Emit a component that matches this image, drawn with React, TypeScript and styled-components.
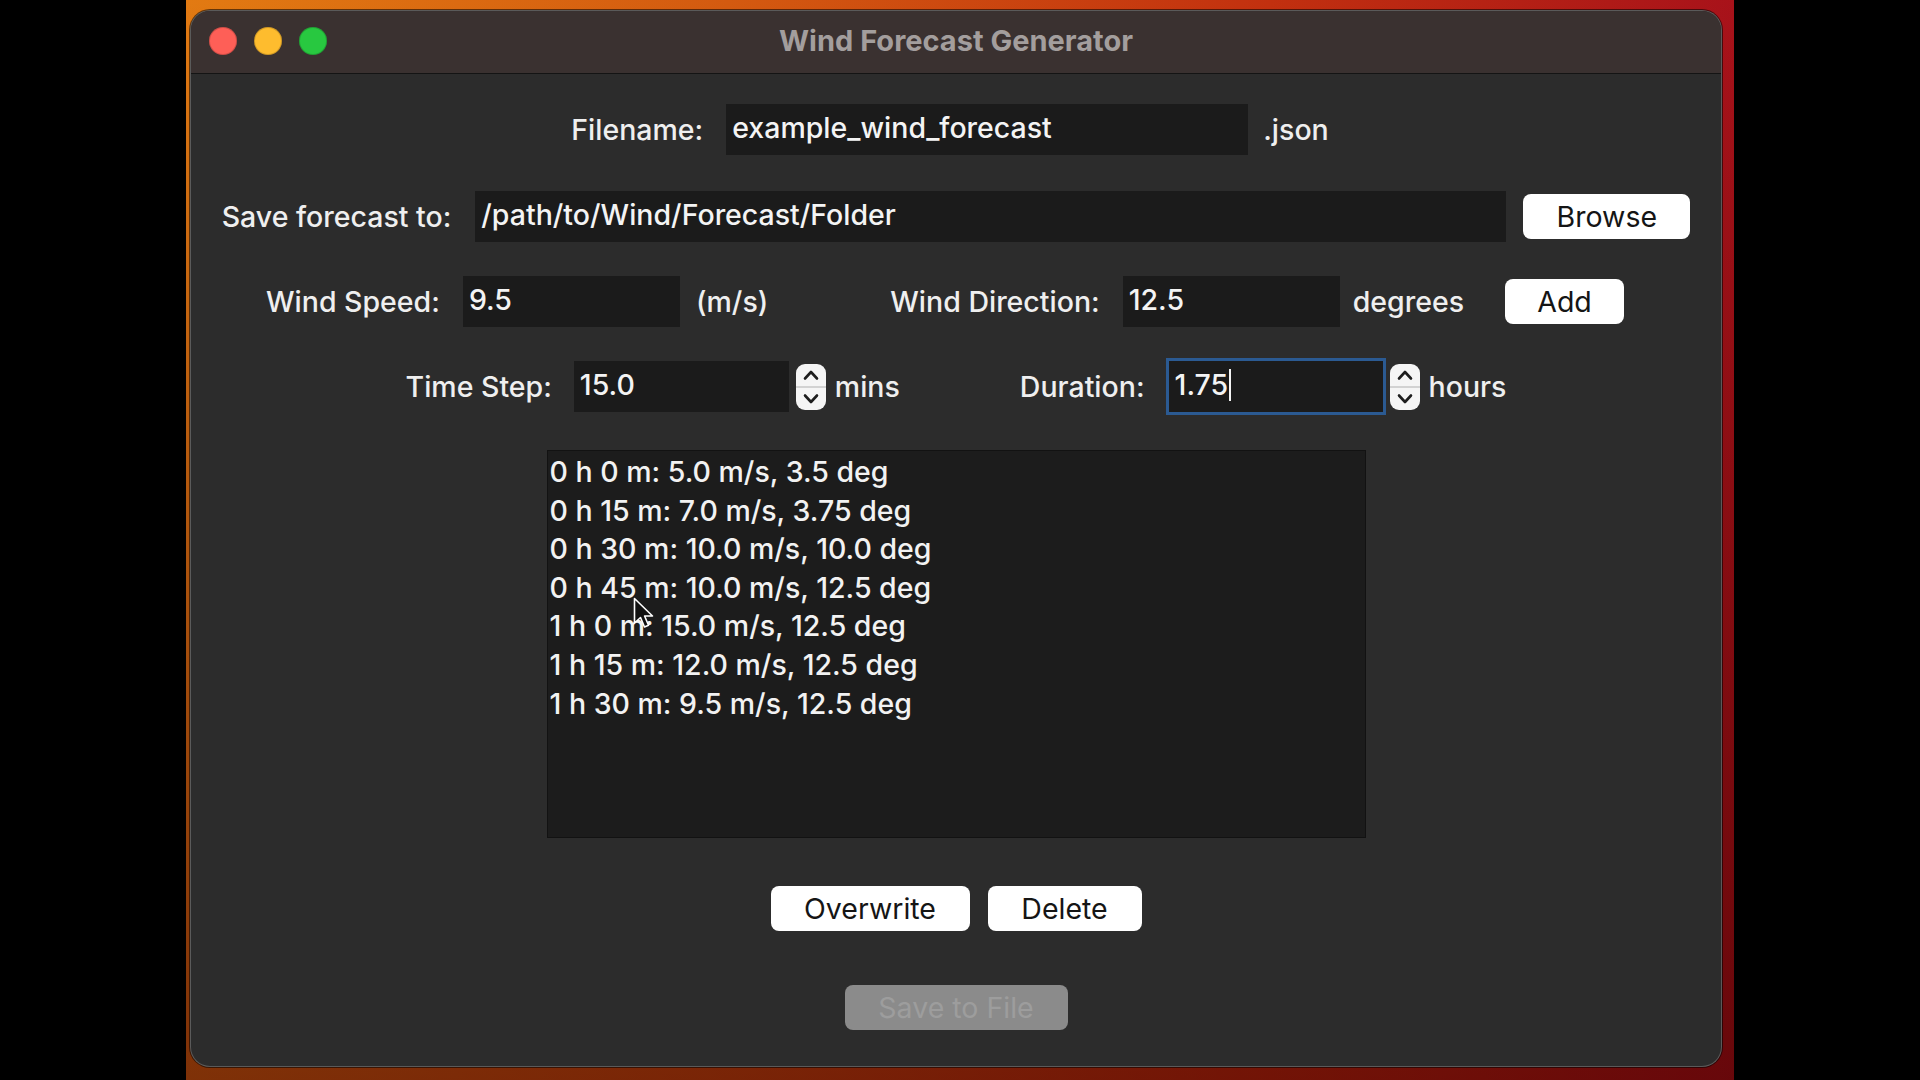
import React from 'react'
import styled, { createGlobalStyle } from 'styled-components'

const GlobalStyle = createGlobalStyle`
  html, body {
    margin: 0;
    padding: 0;
    background: #000;
  }
  body {
    font-family: Inter, "Noto Sans", "Liberation Sans", sans-serif;
  }
`

const Screen = styled.div`
  width: 1920px;
  height: 1080px;
  display: flex;
  justify-content: center;
  background: #000;
  overflow: hidden;
`

const Wallpaper = styled.div`
  width: 1548px;
  height: 1080px;
  box-sizing: border-box;
  padding: 10px 12px 13px 4px;
  background: linear-gradient(180deg, rgba(0, 0, 0, 0) 0%, rgba(60, 0, 0, 0.6) 100%),
    linear-gradient(90deg, #e27a12 0%, #d45a10 35%, #c2300f 70%, #a8121a 100%);
`

const Window = styled.div`
  position: relative;
  width: 1532px;
  height: 1057px;
  box-sizing: border-box;
  border-radius: 20px;
  background: #2c2c2c;
  border: 1px solid rgba(255, 255, 255, 0.22);
  box-shadow: 0 0 0 1px rgba(0, 0, 0, 0.55);
  overflow: hidden;
  display: flex;
  flex-direction: column;
`

const TitleBar = styled.div`
  height: 62px;
  flex-shrink: 0;
  display: grid;
  grid-template-columns: 1fr auto 1fr;
  align-items: center;
  background: #3a3130;
  border-bottom: 1px solid #141414;
  padding: 0 18px;
`

const Lights = styled.div`
  display: flex;
  gap: 17px;
  margin-top: -2px;
`

const Light = styled.span<{ $color: string }>`
  width: 28px;
  height: 28px;
  border-radius: 50%;
  background: ${(p) => p.$color};
  box-shadow: inset 0 0 0 1px rgba(0, 0, 0, 0.18);
`

const Title = styled.div`
  font-size: 29px;
  font-weight: 700;
  color: #a39e9d;
  margin-top: -4px;
`

const Content = styled.div`
  display: flex;
  flex-direction: column;
  align-items: center;
`

const Row = styled.div<{ $top: number; $shift?: number }>`
  display: flex;
  align-items: center;
  margin-top: ${(p) => p.$top}px;
  transform: translateX(${(p) => p.$shift || 0}px);
`

const Label = styled.span<{ $ml?: number }>`
  font-size: 28.5px;
  font-weight: 500;
  color: #efefef;
  margin-left: ${(p) => p.$ml || 0}px;
  white-space: nowrap;
`

const Field = styled.div<{ $w: number; $ml: number; $focused?: boolean }>`
  width: ${(p) => p.$w}px;
  height: 51px;
  box-sizing: border-box;
  margin-left: ${(p) => p.$ml}px;
  padding: 0 6px 4px;
  display: flex;
  align-items: center;
  background: #1b1b1b;
  color: #f4f4f4;
  font-size: 28.5px;
  font-weight: 500;
  white-space: nowrap;
  box-shadow: ${(p) => (p.$focused ? '0 0 0 3px #2b5a92' : 'none')};
`

const Caret = styled.span`
  width: 2px;
  height: 32px;
  margin-left: 1px;
  background: #f4f4f4;
`

const Button = styled.button<{ $w: number; $ml?: number }>`
  width: ${(p) => p.$w}px;
  height: 45px;
  margin-left: ${(p) => p.$ml || 0}px;
  border: none;
  border-radius: 8px;
  background: #ffffff;
  color: #151515;
  font-family: Inter, "Noto Sans", "Liberation Sans", sans-serif;
  font-size: 28.5px;
  font-weight: 400;
  padding: 0;
`

const DisabledButton = styled(Button)`
  background: #8b8b8b;
  color: #9d9d9d;
`

const Spinner = styled.div<{ $ml: number }>`
  width: 30px;
  height: 46px;
  margin-left: ${(p) => p.$ml}px;
  border-radius: 9px;
  background: #f5f5f5;
  display: flex;
  flex-direction: column;
  overflow: hidden;
`

const SpinHalf = styled.div<{ $top?: boolean }>`
  flex: 1;
  display: flex;
  align-items: center;
  justify-content: center;
  border-bottom: ${(p) => (p.$top ? '2px solid #d2d2d2' : 'none')};
`

const ListBox = styled.div`
  width: 819px;
  height: 388px;
  box-sizing: border-box;
  margin-top: 38px;
  padding: 2px 2px 0;
  background: #1c1c1c;
  border: 1px solid #121212;
  color: #f2f2f2;
  font-size: 28.5px;
  font-weight: 500;
  line-height: 38.6px;
`

const ListItem = styled.div`
  white-space: nowrap;
`

const Pointer = styled.svg`
  position: absolute;
  left: 442px;
  top: 586px;
  width: 22px;
  height: 34px;
`

const Chevron = ({ up }: { up?: boolean }) => (
  <svg width="20" height="12" viewBox="0 0 20 12">
    <path
      d={up ? 'M4 9.5 L10 3 L16 9.5' : 'M4 2.5 L10 9 L16 2.5'}
      fill="none"
      stroke="#1e1e1e"
      strokeWidth="2.6"
      strokeLinecap="round"
      strokeLinejoin="round"
    />
  </svg>
)

const NumberSpinner = ({ ml }: { ml: number }) => (
  <Spinner $ml={ml}>
    <SpinHalf $top>
      <Chevron up />
    </SpinHalf>
    <SpinHalf>
      <Chevron />
    </SpinHalf>
  </Spinner>
)

const forecast = [
  '0 h 0 m: 5.0 m/s, 3.5 deg',
  '0 h 15 m: 7.0 m/s, 3.75 deg',
  '0 h 30 m: 10.0 m/s, 10.0 deg',
  '0 h 45 m: 10.0 m/s, 12.5 deg',
  '1 h 0 m: 15.0 m/s, 12.5 deg',
  '1 h 15 m: 12.0 m/s, 12.5 deg',
  '1 h 30 m: 9.5 m/s, 12.5 deg',
]

const App = () => {
  return (
    <Screen>
      <GlobalStyle />
      <Wallpaper>
        <Window>
          <TitleBar>
            <Lights>
              <Light $color="#fe5f57" />
              <Light $color="#febc2e" />
              <Light $color="#28c840" />
            </Lights>
            <Title>Wind Forecast Generator</Title>
            <span />
          </TitleBar>

          <Content>
            <Row $top={30} $shift={-6}>
              <Label>Filename:</Label>
              <Field $w={522} $ml={23}>
                example_wind_forecast
              </Field>
              <Label $ml={15}>.json</Label>
            </Row>

            <Row $top={36}>
              <Label>Save forecast to:</Label>
              <Field $w={1031} $ml={24}>
                /path/to/Wind/Forecast/Folder
              </Field>
              <Button $w={167} $ml={17}>
                Browse
              </Button>
            </Row>

            <Row $top={34} $shift={-11}>
              <Label>Wind Speed:</Label>
              <Field $w={217} $ml={23}>
                9.5
              </Field>
              <Label $ml={16}>(m/s)</Label>
              <Label $ml={122}>Wind Direction:</Label>
              <Field $w={217} $ml={23}>
                12.5
              </Field>
              <Label $ml={13}>degrees</Label>
              <Button $w={119} $ml={41}>
                Add
              </Button>
            </Row>

            <Row $top={34}>
              <Label>Time Step:</Label>
              <Field $w={215} $ml={22}>
                15.0
              </Field>
              <NumberSpinner ml={7} />
              <Label $ml={9}>mins</Label>
              <Label $ml={120}>Duration:</Label>
              <Field $w={214} $ml={24} $focused>
                1.75
                <Caret />
              </Field>
              <NumberSpinner ml={7} />
              <Label $ml={9}>hours</Label>
            </Row>

            <ListBox>
              {forecast.map((line) => (
                <ListItem key={line}>{line}</ListItem>
              ))}
            </ListBox>

            <Row $top={48}>
              <Button $w={199}>Overwrite</Button>
              <Button $w={154} $ml={18}>
                Delete
              </Button>
            </Row>

            <Row $top={54}>
              <DisabledButton $w={223}>Save to File</DisabledButton>
            </Row>
          </Content>

          <Pointer viewBox="0 0 22 34">
            <path
              d="M1.5 1.5 L1.5 26 L7.5 20.5 L11.5 30 L15.5 28.3 L11.6 19 L19.5 19 Z"
              fill="#111"
              stroke="#fff"
              strokeWidth="1.6"
              strokeLinejoin="round"
            />
          </Pointer>
        </Window>
      </Wallpaper>
    </Screen>
  )
}

export default App
